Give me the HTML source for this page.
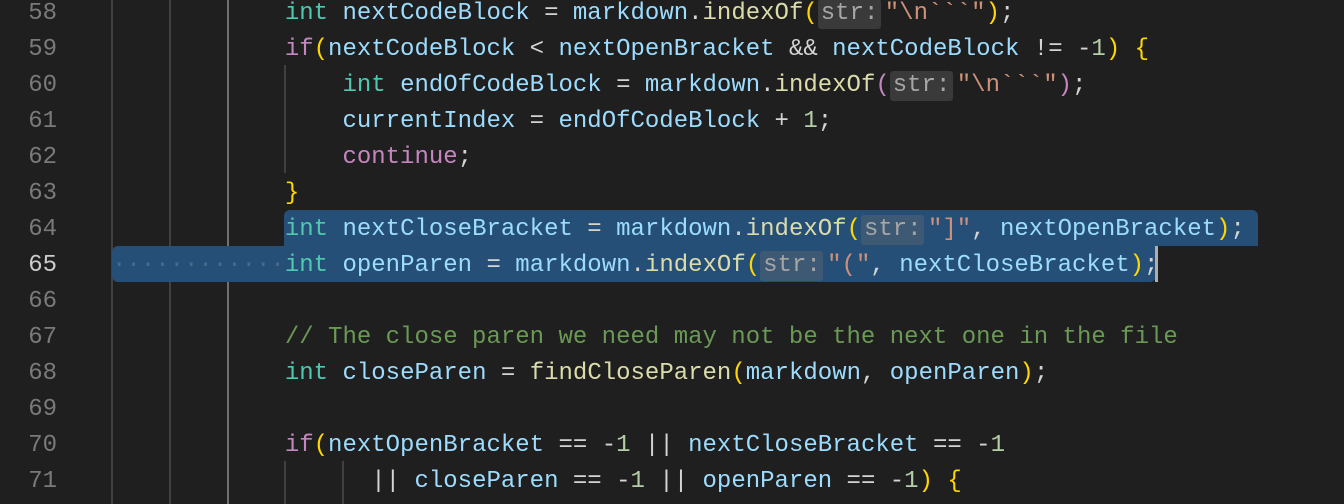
<!DOCTYPE html>
<html><head><meta charset="utf-8"><style>
html,body{margin:0;padding:0;background:#1f1f1f;width:1344px;height:504px;overflow:hidden;position:relative}
.ln{position:absolute;left:0;width:57px;text-align:right;font:24px/36px "Liberation Mono",monospace;color:#7a7a7a;margin-top:3px}
.ln.cur{color:#cccccc}
.code{position:absolute;left:112px;font:24px/36px "Liberation Mono",monospace;color:#d4d4d4;white-space:pre;margin-top:3px}
.g{position:absolute;width:2px;background:#404040}
.sel{position:absolute;background:#264f78}
.t{color:#4ec9b0}.v{color:#9cdcfe}.f{color:#dcdcaa}.s{color:#ce9178}.p{color:#ffd700}.k{color:#c586c0}.n{color:#b5cea8}.c{color:#6a9955}
.h{display:inline-block;width:63px;margin-right:4px;background:rgba(110,110,110,0.35);color:#a6a6a6;border-radius:3px;line-height:30px;text-indent:3px}
.dot{color:#4a6a8a}
</style></head><body>
<div class="g" style="left:111px;top:0;height:504px"></div>
<div class="g" style="left:169px;top:0;height:504px"></div>
<div class="g" style="left:227px;top:0;height:504px;background:#707070"></div>
<div class="g" style="left:284px;top:65px;height:108px"></div>
<div class="g" style="left:284px;top:461px;height:43px"></div>
<div class="g" style="left:342px;top:461px;height:43px"></div>
<div class="sel" style="left:284px;top:210px;width:974px;height:36px;border-radius:6px 6px 0 0"></div>
<div class="sel" style="left:112px;top:246px;width:1044px;height:36px;border-radius:6px 0 6px 6px"></div>
<div style="position:absolute;left:1155px;top:246px;width:3px;height:36px;background:#aeafad"></div>

<div class="ln" style="top:-7px">58</div>
<div class="ln" style="top:29px">59</div>
<div class="ln" style="top:65px">60</div>
<div class="ln" style="top:101px">61</div>
<div class="ln" style="top:137px">62</div>
<div class="ln" style="top:173px">63</div>
<div class="ln" style="top:209px">64</div>
<div class="ln cur" style="top:245px">65</div>
<div class="ln" style="top:281px">66</div>
<div class="ln" style="top:317px">67</div>
<div class="ln" style="top:353px">68</div>
<div class="ln" style="top:389px">69</div>
<div class="ln" style="top:425px">70</div>
<div class="ln" style="top:461px">71</div>

<div class="code" style="top:-7px">            <span class="t">int</span> <span class="v">nextCodeBlock</span> = <span class="v">markdown</span>.<span class="f">indexOf</span><span class="p">(</span><span class="h">str:</span><span class="s">"\n&#96;&#96;&#96;"</span><span class="p">)</span>;</div>
<div class="code" style="top:29px">            <span class="k">if</span><span class="p">(</span><span class="v">nextCodeBlock</span> &lt; <span class="v">nextOpenBracket</span> &amp;&amp; <span class="v">nextCodeBlock</span> != -<span class="n">1</span><span class="p">)</span> <span class="p">{</span></div>
<div class="code" style="top:65px">                <span class="t">int</span> <span class="v">endOfCodeBlock</span> = <span class="v">markdown</span>.<span class="f">indexOf</span><span class="k">(</span><span class="h">str:</span><span class="s">"\n&#96;&#96;&#96;"</span><span class="k">)</span>;</div>
<div class="code" style="top:101px">                <span class="v">currentIndex</span> = <span class="v">endOfCodeBlock</span> + <span class="n">1</span>;</div>
<div class="code" style="top:137px">                <span class="k">continue</span>;</div>
<div class="code" style="top:173px">            <span class="p">}</span></div>
<div class="code" style="top:209px">            <span class="t">int</span> <span class="v">nextCloseBracket</span> = <span class="v">markdown</span>.<span class="f">indexOf</span><span class="p">(</span><span class="h">str:</span><span class="s">"]"</span>, <span class="v">nextOpenBracket</span><span class="p">)</span>;</div>
<div class="code" style="top:245px"><span class="dot">············</span><span class="t">int</span> <span class="v">openParen</span> = <span class="v">markdown</span>.<span class="f">indexOf</span><span class="p">(</span><span class="h">str:</span><span class="s">"("</span>, <span class="v">nextCloseBracket</span><span class="p">)</span>;</div>
<div class="code" style="top:317px">            <span class="c">// The close paren we need may not be the next one in the file</span></div>
<div class="code" style="top:353px">            <span class="t">int</span> <span class="v">closeParen</span> = <span class="f">findCloseParen</span><span class="p">(</span><span class="v">markdown</span>, <span class="v">openParen</span><span class="p">)</span>;</div>
<div class="code" style="top:425px">            <span class="k">if</span><span class="p">(</span><span class="v">nextOpenBracket</span> == -<span class="n">1</span> || <span class="v">nextCloseBracket</span> == -<span class="n">1</span></div>
<div class="code" style="top:461px">                  || <span class="v">closeParen</span> == -<span class="n">1</span> || <span class="v">openParen</span> == -<span class="n">1</span><span class="p">)</span> <span class="p">{</span></div>
</body></html>
